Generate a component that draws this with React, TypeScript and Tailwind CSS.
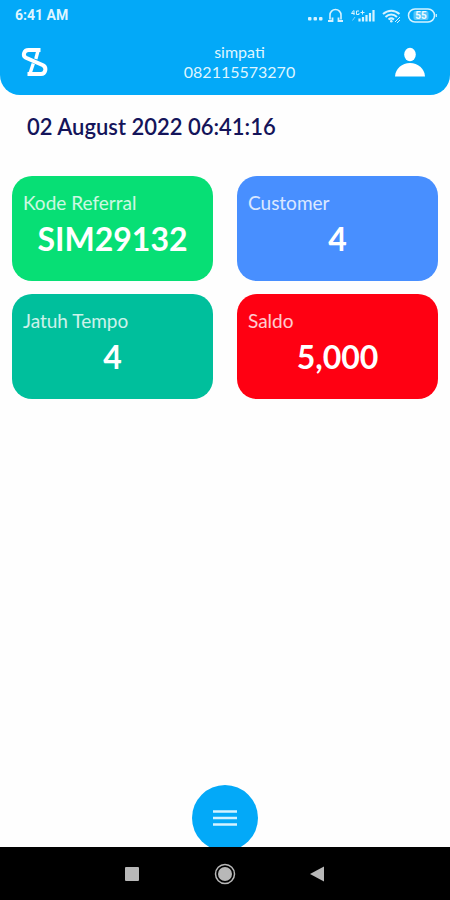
import { useState } from 'react'

const cards = [
  { label: 'Kode Referral', value: 'SIM29132', color: 'bg-[#07df75]' },
  { label: 'Customer', value: '4', color: 'bg-[#488fff]' },
  { label: 'Jatuh Tempo', value: '4', color: 'bg-[#00bf9c]' },
  { label: 'Saldo', value: '5,000', color: 'bg-[#ff0012]' },
]

function StatusIcons() {
  return (
    <svg width="130" height="18" viewBox="0 0 130 18" fill="none" stroke="#d5f2ff" aria-hidden="true">
      {/* notification dots */}
      <g fill="#d5f2ff" stroke="none">
        <rect x="0" y="11" width="3.500" height="3.500" rx="1" />
        <rect x="5.500" y="11" width="3.500" height="3.500" rx="1" />
        <rect x="11" y="11" width="3.500" height="3.500" rx="1" />
      </g>
      {/* headset */}
      <path d="M22 13.500V9a5.500 5.500 0 0 1 11 0v4.500" strokeWidth="1.600" />
      <path d="M20 15h4.500v-3.500M35 15h-4.500v-3.500" strokeWidth="1.800" />
      {/* signal */}
      <path d="M45.500 4.500l-2 3h3M46 4.500v4.500M51 5h-2.500v3.500H51V7M52.500 6.500h4M54.500 4.500v4" strokeWidth="1" />
      <path d="M44.500 14.500l2.500-3.500" strokeWidth="1" opacity="0.6" />
      <path d="M51.500 15.500v-3M55 15.500v-4.500M58.500 15.500v-6.500M62 15.500V7M65.500 15.500V4" strokeWidth="2.200" />
      {/* wifi */}
      <path d="M75 8c5-4.500 11.500-4.500 16.500 0M77.500 11c3.500-3.200 8-3.200 11.500 0M80.500 13.500c2-1.600 3.500-1.600 5.500 0" strokeWidth="2" />
      <circle cx="83.300" cy="15.200" r="1.300" fill="#d5f2ff" stroke="none" />
      <path d="M87 16l5-5M89 17l3-3" strokeWidth="1" />
      {/* battery */}
      <rect x="100.500" y="3" width="26" height="13" rx="6.500" strokeWidth="1.500" />
      <rect x="105.500" y="5" width="15" height="9" rx="2" fill="#d5f2ff" fillOpacity="0.4" stroke="none" />
      <path d="M128.300 8v3" strokeWidth="1.200" />
      <text x="113" y="13" textAnchor="middle" fontSize="10" fontWeight="700" fontFamily="Roboto, sans-serif" fill="#f0fbff" stroke="none">55</text>
    </svg>
  )
}

function Logo() {
  return (
    <svg width="28" height="30" viewBox="0 0 28 30" fill="none" stroke="white" strokeWidth="4" aria-hidden="true">
      <path d="M19.500 3H7.500C3 3 1.200 8.600 5 10.800L22 18.200C26 20.500 24.500 27 20 27H6.500" />
      <path d="M17.500 2L14.800 12" strokeWidth="3.400" />
      <path d="M8.500 28L12.300 16.500" strokeWidth="3.400" />
    </svg>
  )
}

export default function App() {
  const [menuOpen, setMenuOpen] = useState(false)

  return (
    <div className="min-h-screen flex flex-col bg-[#fefefe] font-[Lato,sans-serif]">
      <header className="bg-[#03a9f8] rounded-b-[20px] text-[#dff5ff] pb-[13px]">
        <div className="flex items-center justify-between h-[30px] pl-[15px] pr-3">
          <span className="font-[Roboto,sans-serif] text-sm leading-4 font-bold">6:41 AM</span>
          <StatusIcons />
        </div>
        <div className="flex items-center pl-[21px] pr-6 pt-3">
          <a href="#home" aria-label="Home">
            <Logo />
          </a>
          <div className="flex-1 pl-9 text-center text-base leading-5">
            <p>simpati</p>
            <p>082115573270</p>
          </div>
          <button type="button" aria-label="Profile">
            <svg width="32" height="30" viewBox="0 0 32 30" fill="white" aria-hidden="true">
              <ellipse cx="16" cy="7.500" rx="5.800" ry="6.800" />
              <path d="M1 29.500C1.500 21.500 8 16 16 16s14.500 5.500 15 13.500z" />
            </svg>
          </button>
        </div>
      </header>

      <main className="flex-1">
        <p className="px-[27px] pt-4 text-[22px] leading-8 font-semibold text-[#14145a]">02 August 2022 06:41:16</p>
        <div className="grid grid-cols-2 gap-x-6 gap-y-[13px] px-3 pt-[33px]">
          {cards.map((card) => (
            <section key={card.label} className={`${card.color} rounded-[20px] px-[11px] pt-[15px] pb-[22px]`}>
              <h2 className="text-[19px] leading-6 text-white/80">{card.label}</h2>
              <p className="mt-1 text-center text-[32px] leading-10 font-bold text-white">{card.value}</p>
            </section>
          ))}
        </div>
      </main>

      <div className="flex justify-center h-[62px] overflow-hidden">
        <button
          type="button"
          aria-label="Menu"
          aria-expanded={menuOpen}
          onClick={() => setMenuOpen(!menuOpen)}
          className="size-[66px] shrink-0 rounded-full bg-[#03a9f8] flex items-center justify-center"
        >
          <svg width="26" height="18" viewBox="0 0 26 18" stroke="#d5f2ff" strokeWidth="2.500" aria-hidden="true">
            <path d="M1 2.500h24M1 9h24M1 15.500h24" />
          </svg>
        </button>
      </div>

      <nav className="bg-black h-[53px] flex items-center justify-center text-[#b8b8b8]">
        <button type="button" aria-label="Recent apps" className="w-[93px] flex justify-center">
          <svg width="22" height="22" viewBox="0 0 22 22" fill="currentColor" aria-hidden="true">
            <rect x="4" y="4" width="14" height="14" rx="1" />
          </svg>
        </button>
        <button type="button" aria-label="Home screen" className="w-[93px] flex justify-center">
          <svg width="22" height="22" viewBox="0 0 22 22" fill="currentColor" aria-hidden="true">
            <circle cx="11" cy="11" r="9.500" fill="none" stroke="currentColor" strokeWidth="1.500" />
            <circle cx="11" cy="11" r="7" />
          </svg>
        </button>
        <button type="button" aria-label="Back" className="w-[93px] flex justify-center">
          <svg width="22" height="22" viewBox="0 0 22 22" fill="currentColor" aria-hidden="true">
            <path d="M3 11L17 3.500v15z" />
          </svg>
        </button>
      </nav>
    </div>
  )
}
